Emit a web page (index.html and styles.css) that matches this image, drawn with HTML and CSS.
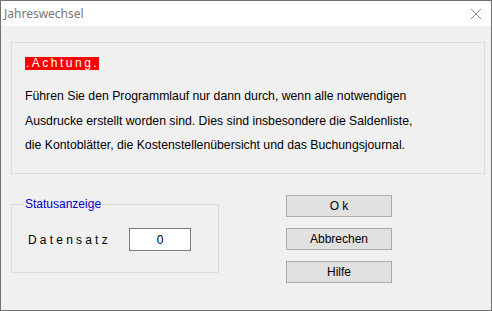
FILE: index.html
```html
<!DOCTYPE html>
<html lang="de">
<head>
    <meta charset="UTF-8">
    <title>Jahreswechsel</title>
    <link rel="stylesheet" href="styles.css">
</head>
<body>
    <div class="dialog">
        <div class="title-bar">
            <span class="title">Jahreswechsel</span>
            <svg class="close" width="12" height="12" viewBox="0 0 12 12">
                <path d="M1 1 L11 11 M11 1 L1 11" stroke="#8a8a8a" stroke-width="1" fill="none"/>
            </svg>
        </div>

        <div class="content">
            <div class="notice">
                <div class="warn-row"><span class="warn">.Achtung.</span></div>
                <p class="notice-text">Führen Sie den Programmlauf nur dann durch, wenn alle notwendigen</p>
                <p class="notice-text">Ausdrucke erstellt worden sind. Dies sind insbesondere die Saldenliste,</p>
                <p class="notice-text">die Kontoblätter, die Kostenstellenübersicht und das Buchungsjournal.</p>
            </div>

            <div class="bottom">
                <fieldset class="status">
                    <legend>Statusanzeige</legend>
                    <div class="status-row">
                        <span class="status-label">Datensatz</span>
                        <input class="status-value" type="text" value="0" readonly>
                    </div>
                </fieldset>

                <div class="buttons">
                    <button class="btn">O k</button>
                    <button class="btn">Abbrechen</button>
                    <button class="btn">Hilfe</button>
                </div>
            </div>
        </div>
    </div>
</body>
</html>
```

FILE: styles.css
```css
* {
    margin: 0;
    padding: 0;
    box-sizing: border-box;
}

body {
    font-family: "Liberation Sans", Arial, sans-serif;
    font-size: 12px;
    color: #000;
    background: #f0f0f0;
}

.dialog {
    width: 492px;
    height: 311px;
    border: 1px solid #707070;
    background: #f0f0f0;
}

.title-bar {
    height: 25px;
    background: #fff;
    display: flex;
    align-items: center;
    justify-content: space-between;
    padding: 0 9px 0 3px;
}

.title {
    font-family: "Noto Sans", sans-serif;
    font-size: 12px;
    color: #777;
}

.close {
    display: block;
}

.content {
    padding: 16px 6px 0 10px;
}

.notice {
    width: 474px;
    height: 132px;
    border: 1px solid #dcdcdc;
    padding: 13px 0 0 13px;
}

.warn-row {
    height: 13px;
    margin-bottom: 15px;
}

.warn {
    display: inline-block;
    height: 13px;
    line-height: 13px;
    padding-left: 1px;
    background: #f00;
    color: #fff;
    letter-spacing: 2.5px;
}

.notice-text {
    font-size: 12.25px;
    line-height: 24.5px;
}

.bottom {
    display: flex;
    align-items: flex-start;
    margin-top: 21px;
}

.status {
    width: 208px;
    height: 76px;
    margin-top: 2px;
    border: 1px solid #dcdcdc;
    padding: 0 0 0 16px;
}

.status legend {
    margin-left: -4px;
    padding: 0 1px;
    color: #0000c8;
    font-size: 12px;
    line-height: 14px;
}

.status-row {
    display: flex;
    align-items: center;
    margin-top: 17px;
}

.status-label {
    letter-spacing: 3.2px;
    width: 101px;
}

.status-value {
    width: 62px;
    height: 23px;
    border: 1px solid #7a7a7a;
    background: #fff;
    font-family: "Liberation Sans", Arial, sans-serif;
    font-size: 12px;
    text-align: center;
    outline: none;
}

.buttons {
    display: flex;
    flex-direction: column;
    gap: 11px;
    margin-left: 67px;
}

.btn {
    width: 106px;
    height: 22px;
    background: #e1e1e1;
    border: 1px solid #adadad;
    font-family: "Liberation Sans", Arial, sans-serif;
    font-size: 12px;
    color: #000;
}
```
